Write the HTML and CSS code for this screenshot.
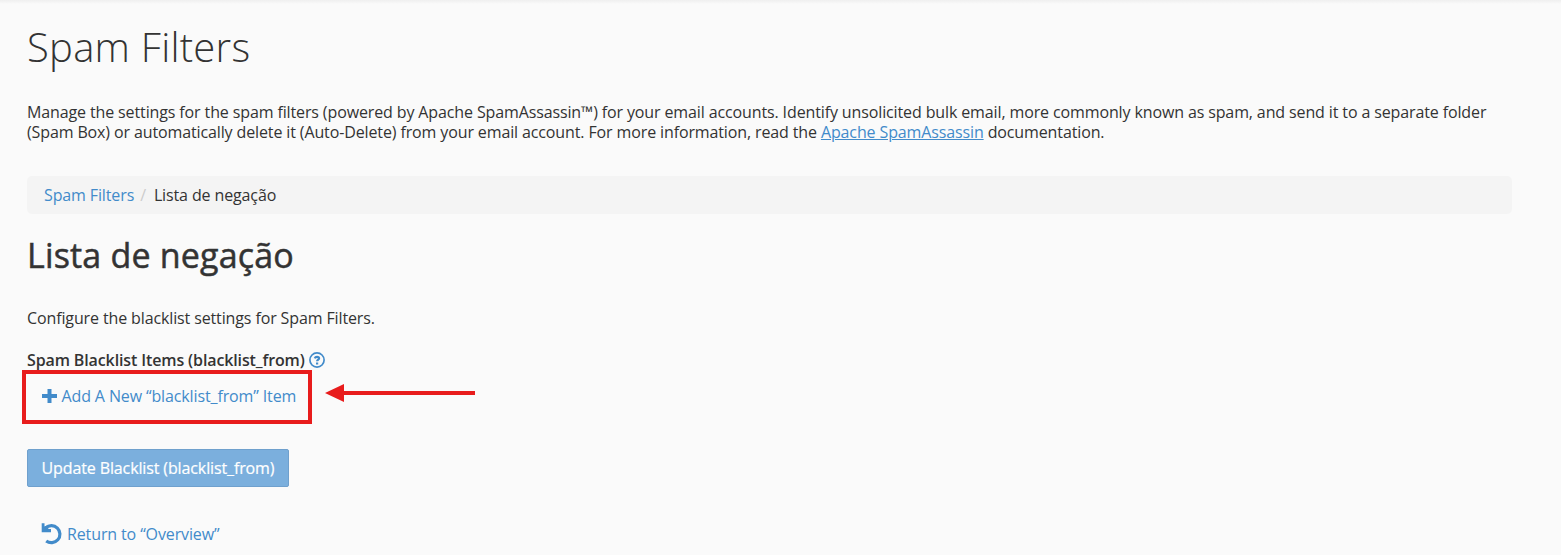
FILE: index.html
```html
<!DOCTYPE html>
<html lang="en">

<head>
    <meta charset="UTF-8">
    <meta name="viewport" content="width=device-width, initial-scale=1.0">
    <title>Spam Filters</title>
    <link rel="stylesheet" href="styles.css">
</head>

<body>
    <div class="content">
        <h1 class="page-title">Spam Filters</h1>
        <p class="description">Manage the settings for the spam filters (powered by Apache SpamAssassin™) for your email accounts. Identify unsolicited bulk email, more commonly known as spam, and send it to a separate folder<br>(Spam Box) or automatically delete it (Auto-Delete) from your email account. For more information, read the <a href="#">Apache SpamAssassin</a> documentation.</p>
        <ol class="breadcrumb">
            <li><a href="#">Spam Filters</a></li>
            <li>Lista de negação</li>
        </ol>
        <h2 class="section-title">Lista de negação</h2>
        <p class="intro">Configure the blacklist settings for Spam Filters.</p>
        <div class="field-label">
            <span>Spam Blacklist Items (blacklist_from)</span>
            <svg class="icon-help" viewBox="0 0 16 16">
                <circle cx="8" cy="8" r="7.1" />
                <path class="mark" d="M5.700 6.300C6.100 5.300 6.900 4.800 8 4.800c1.200 0 2.100.6 2.100 1.500 0 1.300-2 1.300-2 2.900M8.100 10.500v2" />
            </svg>
        </div>
        <div class="add-row">
            <a class="add-link" href="#">
                <svg class="icon-plus" viewBox="0 0 15 14">
                    <path d="M5.500 0h4v5H15v4H9.500v5h-4V9H0V5h5.500z" />
                </svg>
                <span>Add A New “blacklist_from” Item</span>
            </a>
            <svg class="arrow" viewBox="0 0 152 20">
                <path d="M0 10L19 1v7h131v4H19v7z" />
            </svg>
        </div>
        <button class="btn-update" type="button">Update Blacklist (blacklist_from)</button>
        <a class="return-link" href="#">
            <svg class="icon-undo" viewBox="0 0 22 22">
                <path class="undo-head" d="M0.700 0.300H3.500V3.500L6 2.500 7.500 6H10V9.300H0.700z" />
                <path class="undo-arc" d="M4.700 4.900A8.500 8.500 0 1 1 5.200 17.900" />
            </svg>
            <span>Return to “Overview”</span>
        </a>
    </div>
</body>

</html>
```

FILE: styles.css
```css
body,
h1,
h2,
p,
ol,
li {
    margin: 0;
    padding: 0;
    list-style: none;
}

body {
    height: 555px;
    overflow: hidden;
    box-sizing: border-box;
    background: linear-gradient(#efefef, #fafafa 4px);
    color: #333;
    font-family: "Open Sans", sans-serif;
    font-size: 16px;
    line-height: 20px;
    letter-spacing: -0.123px;
}

a {
    color: #428bca;
    text-decoration: none;
}

.content {
    width: 1485px;
    padding: 23px 0 0 27px;
}

.page-title {
    font-size: 40px;
    font-weight: 300;
    line-height: 48px;
    letter-spacing: 0.25px;
}

.description {
    margin-top: 31px;
    white-space: nowrap;
}

.description a {
    text-decoration: underline;
}

.breadcrumb {
    display: flex;
    height: 38px;
    margin-top: 34px;
    padding-left: 17px;
    line-height: 38px;
    border-radius: 5px;
    background: #f4f4f4;
}

.breadcrumb li + li::before {
    content: "/";
    padding: 0 8px 0 6px;
    color: #ccc;
}

.section-title {
    margin-top: 21px;
    font-size: 34px;
    font-weight: 400;
    line-height: 40px;
    letter-spacing: 0.18px;
    -webkit-text-stroke: 0.5px #333;
}

.intro {
    margin-top: 33px;
}

.field-label {
    display: flex;
    align-items: center;
    gap: 4px;
    margin-top: 22px;
    font-weight: 600;
}

.icon-help {
    width: 16px;
    height: 16px;
    fill: none;
    stroke: #428bca;
    stroke-width: 1.7;
}

.icon-help .mark {
    stroke-width: 2.2;
}

.add-row {
    display: flex;
    margin-left: -5.5px;
}

.add-link {
    display: flex;
    align-items: center;
    box-sizing: border-box;
    width: 290px;
    height: 54px;
    padding: 0 0 2px 16px;
    gap: 5px;
    border: 4px solid #e81c1c;
}

.icon-plus {
    width: 15px;
    height: 14px;
    fill: #428bca;
}

.arrow {
    width: 152px;
    height: 20px;
    margin: 13px 0 0 13.5px;
    fill: #e81c1c;
}

.btn-update {
    display: block;
    width: 262px;
    height: 38px;
    margin-top: 25px;
    padding: 0;
    border: 1px solid #6fa0cd;
    border-radius: 2px;
    background: #7bafdd;
    color: #fff;
    font: 16px/20px "Open Sans", sans-serif;
    letter-spacing: -0.123px;
    -webkit-text-stroke: 0.2px #fff;
}

.return-link {
    display: flex;
    align-items: center;
    gap: 4px;
    margin: 36px 0 0 14px;
}

.icon-undo {
    width: 22px;
    height: 22px;
    overflow: visible;
}

.undo-head {
    fill: #428bca;
}

.undo-arc {
    fill: none;
    stroke: #428bca;
    stroke-width: 3.2;
}
```
